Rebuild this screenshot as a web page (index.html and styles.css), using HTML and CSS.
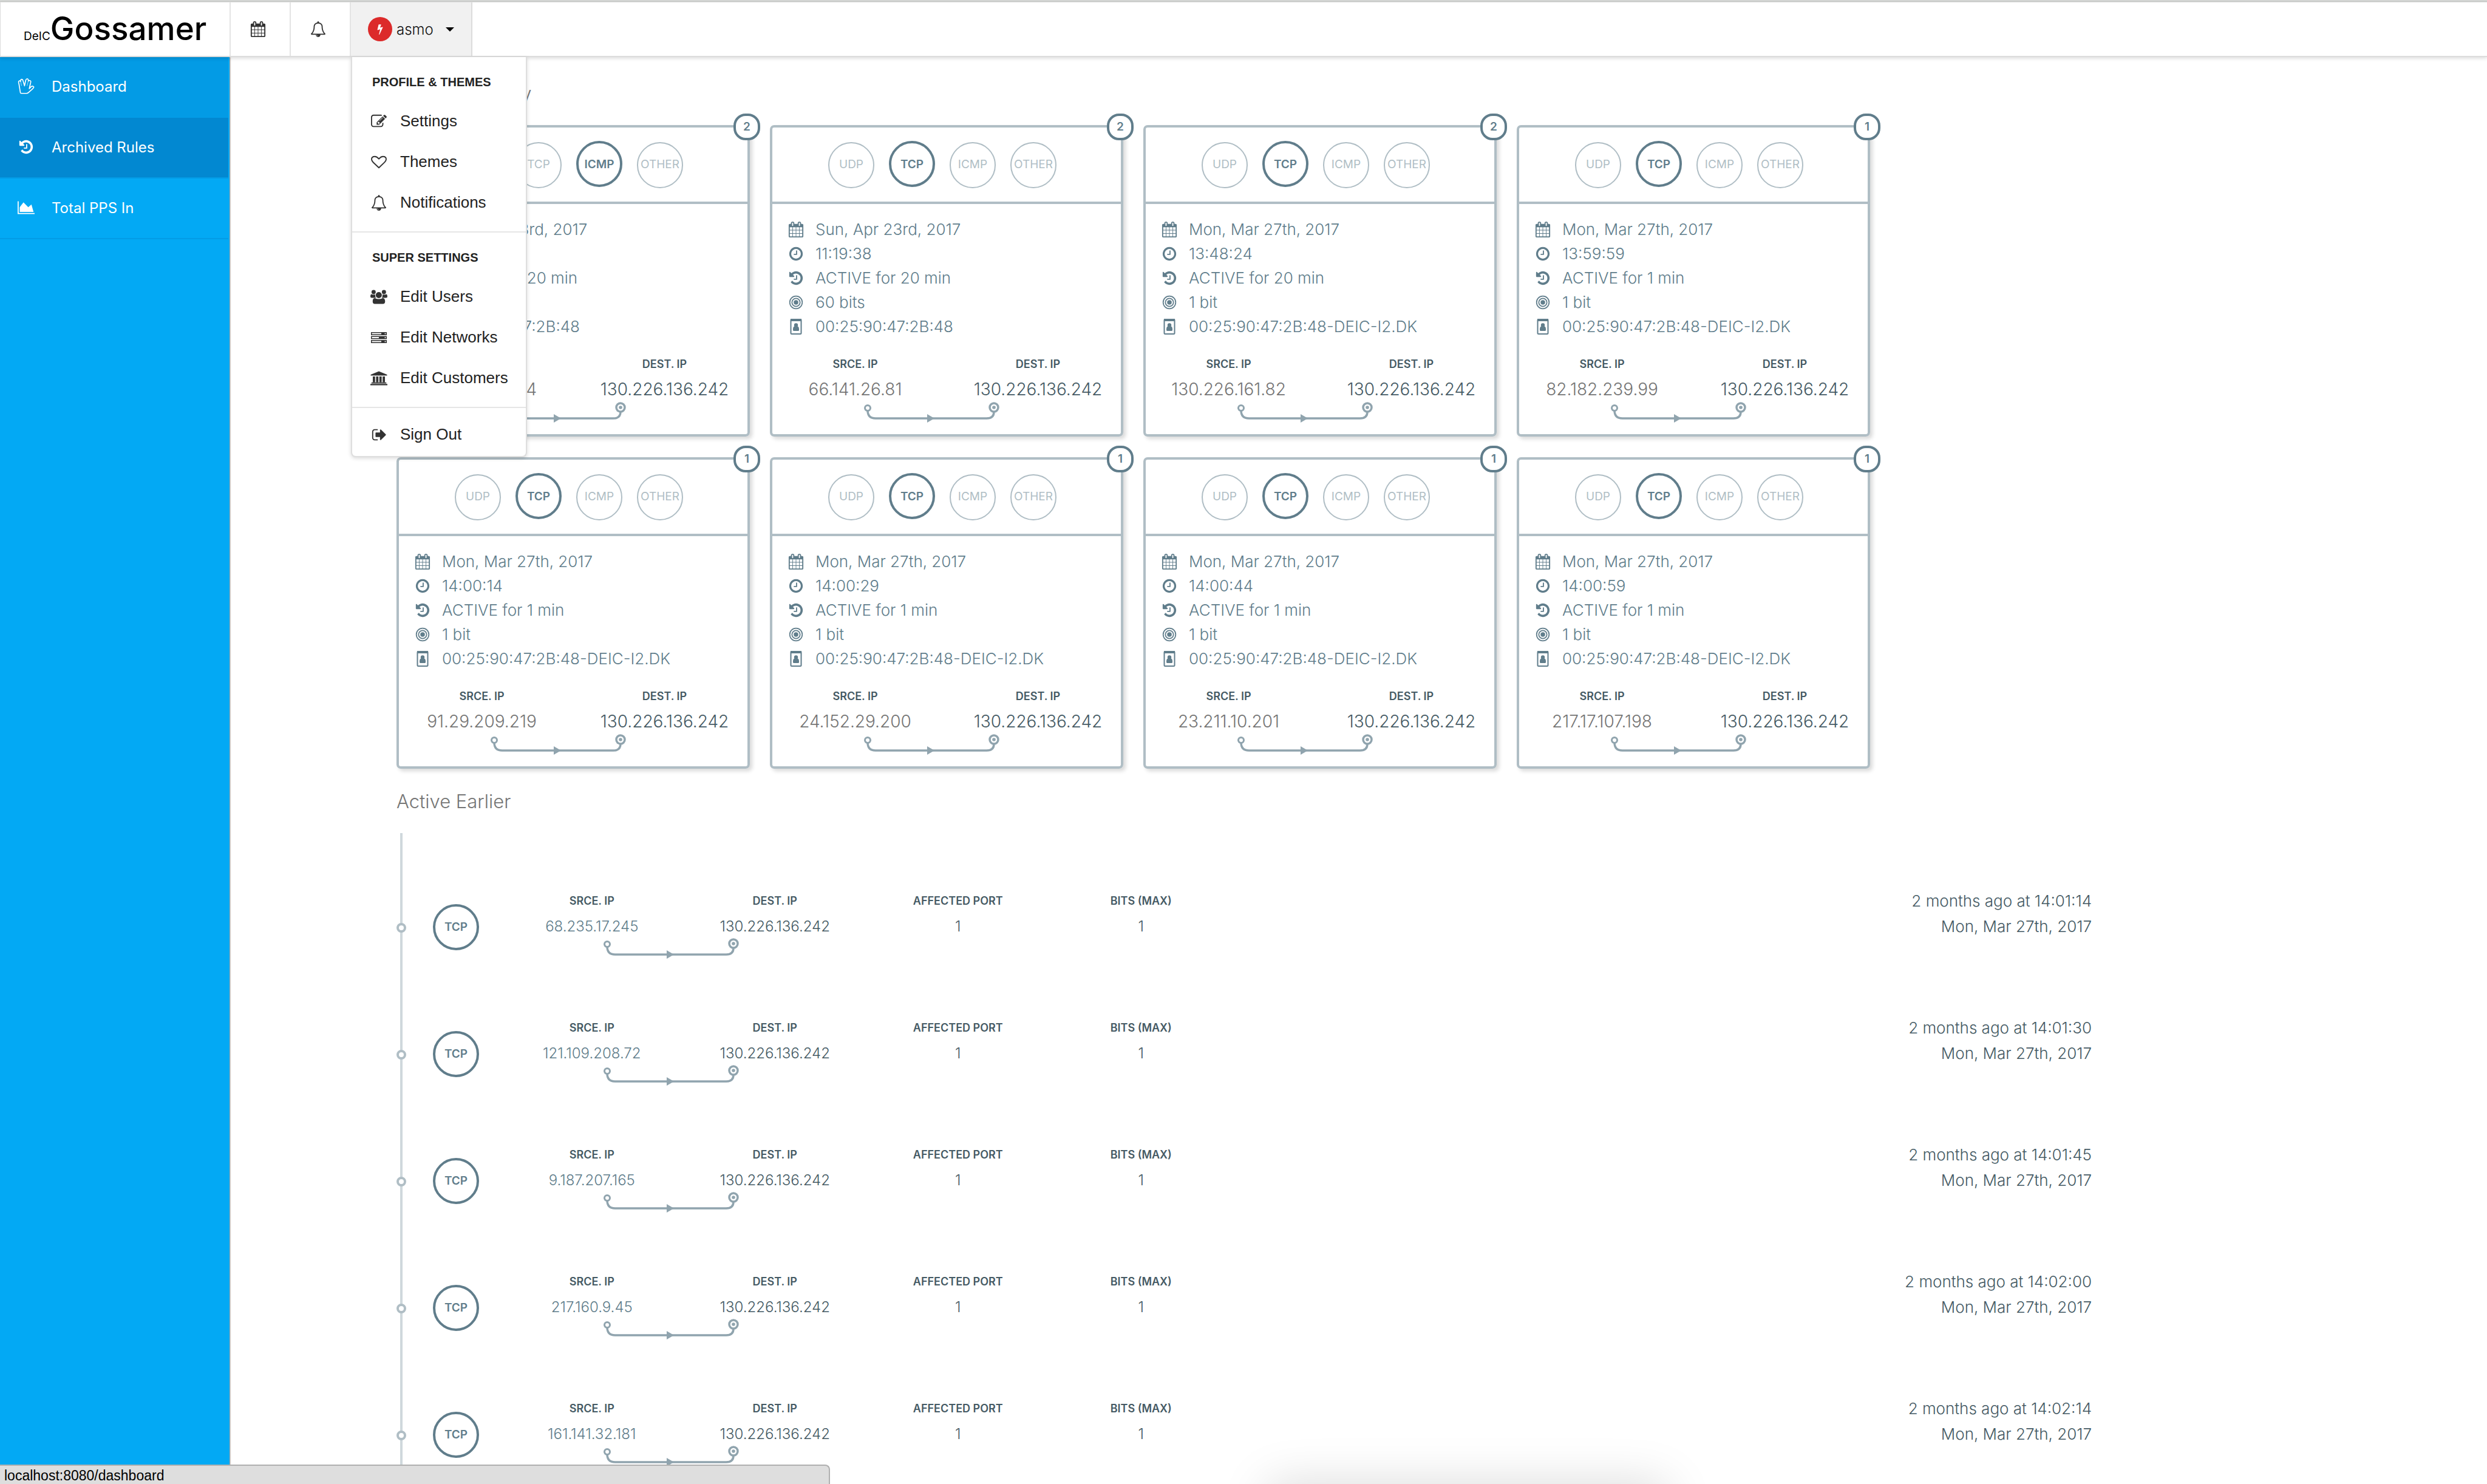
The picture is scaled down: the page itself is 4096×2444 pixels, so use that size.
FILE: index.html
```html
<!DOCTYPE html>
<html lang="en">
<head>
<meta charset="utf-8">
<title>DeIC Gossamer</title>
<link rel="stylesheet" href="styles.css">
</head>
<body>
<svg class="sprite" aria-hidden="true">
  <symbol id="calendar" viewBox="0 0 1792 1792"><path d="M192 1664h288v-288h-288v288zm352 0h320v-288h-320v288zm-352-352h288v-320h-288v320zm352 0h320v-320h-320v320zm-352-384h288v-288h-288v288zm736 736h320v-288h-320v288zm-384-736h320v-288h-320v288zm768 736h288v-288h-288v288zm-384-352h320v-320h-320v320zm-352-864v-288q0-13-9.500-22.500t-22.500-9.500h-64q-13 0-22.500 9.500t-9.500 22.500v288q0 13 9.500 22.500t22.500 9.500h64q13 0 22.500-9.500t9.500-22.500zm736 864h288v-320h-288v320zm-384-384h320v-288h-320v288zm384 0h288v-288h-288v288zm32-480v-288q0-13-9.500-22.500t-22.500-9.500h-64q-13 0-22.500 9.500t-9.500 22.500v288q0 13 9.500 22.500t22.500 9.500h64q13 0 22.500-9.500t9.500-22.500zm384-64v1280q0 52-38 90t-90 38h-1408q-52 0-90-38t-38-90v-1280q0-52 38-90t90-38h128v-96q0-66 47-113t113-47h64q66 0 113 47t47 113v96h384v-96q0-66 47-113t113-47h64q66 0 113 47t47 113v96h128q52 0 90 38t38 90z"/></symbol>
  <symbol id="bell" viewBox="0 0 1792 1792"><path d="M912 1696q0-16-16-16-59 0-101.500-42.500t-42.500-101.500q0-16-16-16t-16 16q0 73 51.500 124.500t124.500 51.500q16 0 16-16zm-666-288h1300q-266-300-266-832 0-51-24-105t-69-103-121.500-80.500-169.500-31.500-169.500 31.500-121.500 80.500-69 103-24 105q0 532-266 832zm1482 0q0 52-38 90t-90 38h-448q0 106-75 181t-181 75-181-75-75-181h-448q-52 0-90-38t-38-90q50-42 91-88t85-119.500 74.500-158.500 50-206 19.500-260q0-152 117-282.500t307-158.500q-8-19-8-39 0-40 28-68t68-28 68 28 28 68q0 20-8 39 190 28 307 158.500t117 282.500q0 139 19.500 260t50 206 74.500 158.500 85 119.500 91 88z"/></symbol>
  <symbol id="history" viewBox="0 0 1792 1792"><path d="M1664 896q0 156-61 298t-164 245-245 164-298 61q-172 0-327-72.500t-264-204.500q-7-10-6.500-22.500t8.500-20.500l137-138q10-9 25-9 16 2 23 12 73 95 179 147t225 52q104 0 198.500-40.500t163.500-109.500 109.500-163.500 40.500-198.500-40.500-198.500-109.500-163.500-163.500-109.500-198.500-40.500q-98 0-188 35.500t-160 101.500l137 138q31 30 14 69-17 40-59 40h-448q-26 0-45-19t-19-45v-448q0-42 40-59 39-17 69 14l130 129q107-101 244.500-156.500t284.500-55.500q156 0 298 61t245 164 164 245 61 298zm-640-288v448q0 14-9 23t-23 9h-320q-14 0-23-9t-9-23v-64q0-14 9-23t23-9h224v-352q0-14 9-23t23-9h64q14 0 23 9t9 23z"/></symbol>
  <symbol id="clock" viewBox="0 0 1792 1792"><path d="M1024 544v448q0 14-9 23t-23 9h-320q-14 0-23-9t-9-23v-64q0-14 9-23t23-9h224v-352q0-14 9-23t23-9h64q14 0 23 9t9 23zm416 352q0-148-73-273t-198-198-273-73-273 73-198 198-73 273 73 273 198 198 273 73 273-73 198-198 73-273zm224 0q0 209-103 385.500t-279.500 279.500-385.500 103-385.500-103-279.500-279.500-103-385.500 103-385.500 279.500-279.500 385.500-103 385.500 103 279.500 279.500 103 385.500z"/></symbol>
  <symbol id="target" viewBox="0 0 1792 1792"><circle cx="896" cy="896" r="710" fill="none" stroke="currentColor" stroke-width="120"/><circle cx="896" cy="896" r="460" fill="none" stroke="currentColor" stroke-width="120"/><circle cx="896" cy="896" r="260"/></symbol>
  <symbol id="badge" viewBox="0 0 26 26"><rect x="4.500" y="1" width="17" height="24" rx="1.500" fill="none" stroke="currentColor" stroke-width="2"/><path d="M4 0h6v2h6V0h6v4H4z"/><circle cx="13" cy="10.500" r="3.200"/><path d="M8 18c0-4 1-5.500 3-5.500 1 1 3 1 4 0 2 0 3 1.500 3 5.500 0 1.500-.5 2-1.500 2h-7C8.500 20 8 19.500 8 18z"/></symbol>
  <symbol id="chart" viewBox="0 0 2048 1792"><path d="M2048 1536v128h-2048v-1536h128v1408h1920zm-384-1024l256 896h-1664v-576l448-576 576 576z"/></symbol>
  <symbol id="hand" viewBox="0 0 84 80"><path fill="none" stroke="currentColor" stroke-width="5" stroke-linejoin="round" d="M13 73 6 30C4 22 2 18 5 15c3-4 8-3 9 1-1-8 2-11 6-11 5 0 6 5 7 9l7 24 6-28c2-7 7-8 10-7 4 2 4 5 3 11 4-5 10-4 12 0 2 3 0 8-1 12l-6 26 10-10c5-4 12-2 13 2 1 3-3 6-7 10L54 72c-3 3-6 4-10 4H20c-4 0-6 0-7-3z"/><path fill="none" stroke="currentColor" stroke-width="2" d="m14 16 5 22m34-24-6 24"/></symbol>
  <symbol id="edit" viewBox="0 0 1792 1792"><path d="M888 1184l116-116-152-152-116 116v56h96v96h56zm440-720q-16-16-33 1l-350 350q-17 17-1 33t33-1l350-350q17-17 1-33zm80 594v190q0 119-84.500 203.500t-203.500 84.500h-832q-119 0-203.500-84.500t-84.500-203.500v-832q0-119 84.500-203.500t203.500-84.500h832q63 0 117 25 15 7 18 23 3 17-9 29l-49 49q-14 14-32 8-23-6-45-6h-832q-66 0-113 47t-47 113v832q0 66 47 113t113 47h832q66 0 113-47t47-113v-126q0-13 9-22l64-64q15-15 35-7t20 29zm-96-738l288 288-672 672h-288v-288zm444 132l-92 92-288-288 92-92q28-28 68-28t68 28l152 152q28 28 28 68t-28 68z"/></symbol>
  <symbol id="heart" viewBox="0 0 26 26"><path fill="none" stroke="currentColor" stroke-width="1.900" stroke-linejoin="round" d="M13 22.300 3.500 13.200C1.600 11.300 1 9.700 1 8.300 1 5.200 3.200 3.700 6.300 3.700c3 0 4.900 1.800 6.700 4 1.800-2.200 3.700-4 6.700-4 3.100 0 5.300 1.500 5.300 4.600 0 1.400-.6 3-2.500 4.900z"/></symbol>
  <symbol id="users" viewBox="0 0 89 73"><circle cx="17" cy="11" r="11"/><circle cx="71" cy="11" r="11"/><circle cx="44" cy="27" r="16"/><path d="M0 35c0-8 2-13 7-13q9 5 18 1-1 10 4 18H7q-7 0-7-6zM89 35c0-8-2-13-7-13q-9 5-18 1 1 10-4 18h22q7 0 7-6zM12 60c0-12 4-17 12-17q20 10 40 0c8 0 13 5 13 17 0 9-4 13-11 13H23c-7 0-11-4-11-13z"/></symbol>
  <symbol id="server" viewBox="0 0 26 26"><path fill-rule="evenodd" d="M0 4h26v5H0zm1.500 1.600v1.800H17V5.600zM0 10.500h26v5H0zm1.500 1.600v1.800H13v-1.800zM0 17h26v5H0zm1.500 1.600v1.800H17v-1.800z"/><g fill="#fff"><circle cx="23.500" cy="6.500" r="1"/><circle cx="23.500" cy="13" r="1"/><circle cx="23.500" cy="19.500" r="1"/></g></symbol>
  <symbol id="bank" viewBox="0 0 28 23"><path d="M14 0 27.500 5.500V7H.5V5.500zM4 8.500h3.800V18H4zm5.400 0h3.800V18H9.400zm5.400 0h3.800V18h-3.800zm5.400 0H24V18h-3.800zM1.800 18.300h24.400v1.800H1.800zM0 20.800h28V23H0z"/></symbol>
  <symbol id="signout" viewBox="-64 0 1792 1792"><path d="M704 1440q0 4 1 20t.5 26.500-3 23.500-10 19.500-20.500 6.500h-320q-119 0-203.500-84.500t-84.500-203.500v-704q0-119 84.500-203.500t203.500-84.500h320q13 0 22.500 9.500t9.500 22.500q0 4 1 20t.5 26.500-3 23.500-10 19.500-20.500 6.500h-320q-66 0-113 47t-47 113v704q0 66 47 113t113 47h312l11.500 1 11.500 3 8 5.500 7 9 2 13.500zm928-544q0 26-19 45l-544 544q-19 19-45 19t-45-19-19-45v-288h-448q-26 0-45-19t-19-45v-384q0-26 19-45t45-19h448v-288q0-26 19-45t45-19 45 19l544 544q19 19 19 45z"/></symbol>
  <symbol id="bolt" viewBox="0 0 1792 1792"><path d="M1333 566q18 20 7 44l-540 1157q-13 25-42 25-4 0-14-2-17-5-25.500-19t-4.500-30l197-808-406 101q-4 1-12 1-18 0-31-11-18-15-13-39l201-825q4-14 16-23t28-9h328q19 0 32 12.500t13 29.500q0 8-5 18l-171 463 396-98q8-2 12-2 19 0 34 15z"/></symbol>
  <symbol id="link" viewBox="0 0 226 34"><g fill="none" stroke="currentColor"><path stroke-width="3.500" d="M8 14c0 9 5 13 13 13h183c8 0 12-4 12-11"/><circle cx="8" cy="10" r="4.500" stroke-width="3" fill="#fff"/><circle cx="216" cy="9" r="7" stroke-width="3.500" fill="#fff"/></g><circle cx="216" cy="9" r="2.800"/><path d="m106 20 12 7-12 7z"/></symbol>
</svg>

<header class="topbar">
  <div class="topbar-inner">
    <a class="logo" href="#"><span class="logo-small">DeIC</span><span class="logo-name">Gossamer</span></a>
    <button class="tool" aria-label="Calendar"><svg class="icon"><use href="#calendar"/></svg></button>
    <button class="tool" aria-label="Notifications"><svg class="icon"><use href="#bell"/></svg></button>
    <div class="account">
      <button class="account-button" aria-expanded="true"><span class="avatar"><svg class="bolt"><use href="#bolt"/></svg></span>asmo<span class="caret"></span></button>
      <div class="menu">
        <div class="menu-group">
          <h2 class="menu-title">PROFILE &amp; THEMES</h2>
          <a class="menu-item" href="#"><svg class="icon"><use href="#edit"/></svg>Settings</a>
          <a class="menu-item" href="#"><svg class="icon"><use href="#heart"/></svg>Themes</a>
          <a class="menu-item" href="#"><svg class="icon"><use href="#bell"/></svg>Notifications</a>
        </div>
        <div class="menu-group">
          <h2 class="menu-title">SUPER SETTINGS</h2>
          <a class="menu-item" href="#"><svg class="icon wide"><use href="#users"/></svg>Edit Users</a>
          <a class="menu-item" href="#"><svg class="icon"><use href="#server"/></svg>Edit Networks</a>
          <a class="menu-item" href="#"><svg class="icon wide"><use href="#bank"/></svg>Edit Customers</a>
        </div>
        <div class="menu-group menu-last">
          <a class="menu-item" href="#"><svg class="icon"><use href="#signout"/></svg>Sign Out</a>
        </div>
      </div>
    </div>
  </div>
</header>

<div class="layout">
  <nav class="sidebar">
    <a class="nav-item nav-hover" href="#"><svg class="nav-icon"><use href="#hand"/></svg>Dashboard</a>
    <a class="nav-item nav-active" href="#"><svg class="nav-icon"><use href="#history"/></svg>Archived Rules</a>
    <a class="nav-item" href="#"><svg class="nav-icon"><use href="#chart"/></svg>Total PPS In</a>
  </nav>

  <main class="content">
    <h1 class="heading">Active Recently</h1>
    <div class="cards">
      <article class="card">
        <span class="count">2</span>
        <div class="protocols"><span class="circle">UDP</span><span class="circle">TCP</span><span class="circle on">ICMP</span><span class="circle">OTHER</span></div>
        <ul class="facts">
          <li><svg class="icon"><use href="#calendar"/></svg>Sun, Apr 23rd, 2017</li>
          <li><svg class="icon"><use href="#clock"/></svg>11:19:38</li>
          <li><svg class="icon"><use href="#history"/></svg>ACTIVE for 20 min</li>
          <li><svg class="icon"><use href="#target"/></svg>60 bits</li>
          <li><svg class="icon"><use href="#badge"/></svg>00:25:90:47:2B:48</li>
        </ul>
        <dl class="route"><div class="pair"><dt>SRCE. IP</dt><dd>91.29.209.214</dd></div><div class="pair dest"><dt>DEST. IP</dt><dd>130.226.136.242</dd></div></dl>
        <svg class="link"><use href="#link"/></svg>
      </article>
      <article class="card">
        <span class="count">2</span>
        <div class="protocols"><span class="circle">UDP</span><span class="circle on">TCP</span><span class="circle">ICMP</span><span class="circle">OTHER</span></div>
        <ul class="facts">
          <li><svg class="icon"><use href="#calendar"/></svg>Sun, Apr 23rd, 2017</li>
          <li><svg class="icon"><use href="#clock"/></svg>11:19:38</li>
          <li><svg class="icon"><use href="#history"/></svg>ACTIVE for 20 min</li>
          <li><svg class="icon"><use href="#target"/></svg>60 bits</li>
          <li><svg class="icon"><use href="#badge"/></svg>00:25:90:47:2B:48</li>
        </ul>
        <dl class="route"><div class="pair"><dt>SRCE. IP</dt><dd>66.141.26.81</dd></div><div class="pair dest"><dt>DEST. IP</dt><dd>130.226.136.242</dd></div></dl>
        <svg class="link"><use href="#link"/></svg>
      </article>
      <article class="card">
        <span class="count">2</span>
        <div class="protocols"><span class="circle">UDP</span><span class="circle on">TCP</span><span class="circle">ICMP</span><span class="circle">OTHER</span></div>
        <ul class="facts">
          <li><svg class="icon"><use href="#calendar"/></svg>Mon, Mar 27th, 2017</li>
          <li><svg class="icon"><use href="#clock"/></svg>13:48:24</li>
          <li><svg class="icon"><use href="#history"/></svg>ACTIVE for 20 min</li>
          <li><svg class="icon"><use href="#target"/></svg>1 bit</li>
          <li><svg class="icon"><use href="#badge"/></svg>00:25:90:47:2B:48-DEIC-I2.DK</li>
        </ul>
        <dl class="route"><div class="pair"><dt>SRCE. IP</dt><dd>130.226.161.82</dd></div><div class="pair dest"><dt>DEST. IP</dt><dd>130.226.136.242</dd></div></dl>
        <svg class="link"><use href="#link"/></svg>
      </article>
      <article class="card">
        <span class="count">1</span>
        <div class="protocols"><span class="circle">UDP</span><span class="circle on">TCP</span><span class="circle">ICMP</span><span class="circle">OTHER</span></div>
        <ul class="facts">
          <li><svg class="icon"><use href="#calendar"/></svg>Mon, Mar 27th, 2017</li>
          <li><svg class="icon"><use href="#clock"/></svg>13:59:59</li>
          <li><svg class="icon"><use href="#history"/></svg>ACTIVE for 1 min</li>
          <li><svg class="icon"><use href="#target"/></svg>1 bit</li>
          <li><svg class="icon"><use href="#badge"/></svg>00:25:90:47:2B:48-DEIC-I2.DK</li>
        </ul>
        <dl class="route"><div class="pair"><dt>SRCE. IP</dt><dd>82.182.239.99</dd></div><div class="pair dest"><dt>DEST. IP</dt><dd>130.226.136.242</dd></div></dl>
        <svg class="link"><use href="#link"/></svg>
      </article>
      <article class="card">
        <span class="count">1</span>
        <div class="protocols"><span class="circle">UDP</span><span class="circle on">TCP</span><span class="circle">ICMP</span><span class="circle">OTHER</span></div>
        <ul class="facts">
          <li><svg class="icon"><use href="#calendar"/></svg>Mon, Mar 27th, 2017</li>
          <li><svg class="icon"><use href="#clock"/></svg>14:00:14</li>
          <li><svg class="icon"><use href="#history"/></svg>ACTIVE for 1 min</li>
          <li><svg class="icon"><use href="#target"/></svg>1 bit</li>
          <li><svg class="icon"><use href="#badge"/></svg>00:25:90:47:2B:48-DEIC-I2.DK</li>
        </ul>
        <dl class="route"><div class="pair"><dt>SRCE. IP</dt><dd>91.29.209.219</dd></div><div class="pair dest"><dt>DEST. IP</dt><dd>130.226.136.242</dd></div></dl>
        <svg class="link"><use href="#link"/></svg>
      </article>
      <article class="card">
        <span class="count">1</span>
        <div class="protocols"><span class="circle">UDP</span><span class="circle on">TCP</span><span class="circle">ICMP</span><span class="circle">OTHER</span></div>
        <ul class="facts">
          <li><svg class="icon"><use href="#calendar"/></svg>Mon, Mar 27th, 2017</li>
          <li><svg class="icon"><use href="#clock"/></svg>14:00:29</li>
          <li><svg class="icon"><use href="#history"/></svg>ACTIVE for 1 min</li>
          <li><svg class="icon"><use href="#target"/></svg>1 bit</li>
          <li><svg class="icon"><use href="#badge"/></svg>00:25:90:47:2B:48-DEIC-I2.DK</li>
        </ul>
        <dl class="route"><div class="pair"><dt>SRCE. IP</dt><dd>24.152.29.200</dd></div><div class="pair dest"><dt>DEST. IP</dt><dd>130.226.136.242</dd></div></dl>
        <svg class="link"><use href="#link"/></svg>
      </article>
      <article class="card">
        <span class="count">1</span>
        <div class="protocols"><span class="circle">UDP</span><span class="circle on">TCP</span><span class="circle">ICMP</span><span class="circle">OTHER</span></div>
        <ul class="facts">
          <li><svg class="icon"><use href="#calendar"/></svg>Mon, Mar 27th, 2017</li>
          <li><svg class="icon"><use href="#clock"/></svg>14:00:44</li>
          <li><svg class="icon"><use href="#history"/></svg>ACTIVE for 1 min</li>
          <li><svg class="icon"><use href="#target"/></svg>1 bit</li>
          <li><svg class="icon"><use href="#badge"/></svg>00:25:90:47:2B:48-DEIC-I2.DK</li>
        </ul>
        <dl class="route"><div class="pair"><dt>SRCE. IP</dt><dd>23.211.10.201</dd></div><div class="pair dest"><dt>DEST. IP</dt><dd>130.226.136.242</dd></div></dl>
        <svg class="link"><use href="#link"/></svg>
      </article>
      <article class="card">
        <span class="count">1</span>
        <div class="protocols"><span class="circle">UDP</span><span class="circle on">TCP</span><span class="circle">ICMP</span><span class="circle">OTHER</span></div>
        <ul class="facts">
          <li><svg class="icon"><use href="#calendar"/></svg>Mon, Mar 27th, 2017</li>
          <li><svg class="icon"><use href="#clock"/></svg>14:00:59</li>
          <li><svg class="icon"><use href="#history"/></svg>ACTIVE for 1 min</li>
          <li><svg class="icon"><use href="#target"/></svg>1 bit</li>
          <li><svg class="icon"><use href="#badge"/></svg>00:25:90:47:2B:48-DEIC-I2.DK</li>
        </ul>
        <dl class="route"><div class="pair"><dt>SRCE. IP</dt><dd>217.17.107.198</dd></div><div class="pair dest"><dt>DEST. IP</dt><dd>130.226.136.242</dd></div></dl>
        <svg class="link"><use href="#link"/></svg>
      </article>
    </div>

    <h1 class="heading">Active Earlier</h1>
    <ol class="timeline">
      <li class="event">
        <span class="circle on">TCP</span>
        <div class="details">
          <dl class="route"><div class="pair"><dt>SRCE. IP</dt><dd>68.235.17.245</dd></div><div class="pair dest"><dt>DEST. IP</dt><dd>130.226.136.242</dd></div><div class="pair dest"><dt>AFFECTED PORT</dt><dd>1</dd></div><div class="pair dest"><dt>BITS (MAX)</dt><dd>1</dd></div></dl>
          <svg class="link"><use href="#link"/></svg>
        </div>
        <p class="when">2 months ago at 14:01:14<br>Mon, Mar 27th, 2017</p>
      </li>
      <li class="event">
        <span class="circle on">TCP</span>
        <div class="details">
          <dl class="route"><div class="pair"><dt>SRCE. IP</dt><dd>121.109.208.72</dd></div><div class="pair dest"><dt>DEST. IP</dt><dd>130.226.136.242</dd></div><div class="pair dest"><dt>AFFECTED PORT</dt><dd>1</dd></div><div class="pair dest"><dt>BITS (MAX)</dt><dd>1</dd></div></dl>
          <svg class="link"><use href="#link"/></svg>
        </div>
        <p class="when">2 months ago at 14:01:30<br>Mon, Mar 27th, 2017</p>
      </li>
      <li class="event">
        <span class="circle on">TCP</span>
        <div class="details">
          <dl class="route"><div class="pair"><dt>SRCE. IP</dt><dd>9.187.207.165</dd></div><div class="pair dest"><dt>DEST. IP</dt><dd>130.226.136.242</dd></div><div class="pair dest"><dt>AFFECTED PORT</dt><dd>1</dd></div><div class="pair dest"><dt>BITS (MAX)</dt><dd>1</dd></div></dl>
          <svg class="link"><use href="#link"/></svg>
        </div>
        <p class="when">2 months ago at 14:01:45<br>Mon, Mar 27th, 2017</p>
      </li>
      <li class="event">
        <span class="circle on">TCP</span>
        <div class="details">
          <dl class="route"><div class="pair"><dt>SRCE. IP</dt><dd>217.160.9.45</dd></div><div class="pair dest"><dt>DEST. IP</dt><dd>130.226.136.242</dd></div><div class="pair dest"><dt>AFFECTED PORT</dt><dd>1</dd></div><div class="pair dest"><dt>BITS (MAX)</dt><dd>1</dd></div></dl>
          <svg class="link"><use href="#link"/></svg>
        </div>
        <p class="when">2 months ago at 14:02:00<br>Mon, Mar 27th, 2017</p>
      </li>
      <li class="event">
        <span class="circle on">TCP</span>
        <div class="details">
          <dl class="route"><div class="pair"><dt>SRCE. IP</dt><dd>161.141.32.181</dd></div><div class="pair dest"><dt>DEST. IP</dt><dd>130.226.136.242</dd></div><div class="pair dest"><dt>AFFECTED PORT</dt><dd>1</dd></div><div class="pair dest"><dt>BITS (MAX)</dt><dd>1</dd></div></dl>
          <svg class="link"><use href="#link"/></svg>
        </div>
        <p class="when">2 months ago at 14:02:14<br>Mon, Mar 27th, 2017</p>
      </li>
    </ol>
  </main>
</div>

<div class="dock-shadow"></div>
<div class="status">localhost:8080/dashboard</div>
</body>
</html>
```
FILE: styles.css
```css
*,
*::before {
  box-sizing: border-box;
}

body,
h1,
h2,
p,
ul,
ol,
dl,
dd {
  margin: 0;
  padding: 0;
}

ul,
ol {
  list-style: none;
}

body {
  display: flex;
  flex-direction: column;
  height: 100vh;
  overflow: hidden;
  background: #fff;
  color: #455a64;
  font-family: Inter, "Liberation Sans", sans-serif;
  font-weight: 300;
}

a {
  color: inherit;
  text-decoration: none;
}

button {
  margin: 0;
  padding: 0;
  border: 0;
  background: none;
  color: inherit;
  font: inherit;
}

svg {
  display: block;
  flex: none;
  fill: currentColor;
}

.sprite {
  position: absolute;
  width: 0;
  height: 0;
}

.icon {
  width: 26px;
  height: 26px;
}

/* Top bar */

.topbar {
  position: relative;
  z-index: 2;
  margin-top: 1px;
  border-top: 1px solid #a3a8a3;
  background: #fff;
  box-shadow: 0 2px 6px rgba(0, 0, 0, 0.15);
}

.topbar-inner {
  display: flex;
  height: 92px;
  border: 2px solid #dcdcdc;
  border-width: 2px 0 2px 1px;
}

.logo {
  display: flex;
  align-items: baseline;
  width: 379px;
  padding: 11px 0 0 38px;
  border-right: 2px solid #e4e4e4;
  color: #000;
  line-height: 64px;
}

.logo-small {
  font-size: 19px;
  font-weight: 400;
}

.logo-name {
  font-size: 53px;
  font-weight: 500;
}

.tool {
  display: flex;
  align-items: center;
  justify-content: center;
  width: 99px;
  padding-right: 8px;
  border-right: 2px solid #e4e4e4;
  color: #333;
}

.account {
  position: relative;
  display: flex;
}

.account-button {
  display: flex;
  align-items: center;
  width: 200px;
  padding-left: 28px;
  border-right: 2px solid #dcdcdc;
  background: #f1f1f1;
  color: #111;
  font-size: 24px;
}

.avatar {
  display: flex;
  align-items: center;
  justify-content: center;
  width: 40px;
  height: 40px;
  margin-right: 7px;
  border-radius: 50%;
  background: #dc2a2a;
  color: #fff;
}

.bolt {
  width: 18px;
  height: 18px;
}

.caret {
  margin-left: 20px;
  border: 7px solid transparent;
  border-top-color: #000;
  border-bottom-width: 0;
}

.menu {
  position: absolute;
  top: 100%;
  left: 0;
  width: 290px;
  margin-top: 2px;
  border: 2px solid #dedede;
  border-top: 0;
  border-radius: 0 0 8px 8px;
  background: #fff;
  color: #222;
  font-family: "Liberation Sans", Arial, sans-serif;
  font-weight: 400;
  box-shadow: 0 2px 6px rgba(0, 0, 0, 0.15);
}

.menu-group {
  padding: 10px 0 14px;
  border-bottom: 2px solid #e6e6e6;
}

.menu-last {
  padding-bottom: 2px;
  border-bottom: 0;
}

.menu-title {
  padding-left: 33px;
  font-size: 20px;
  line-height: 62px;
}

.menu-item {
  display: flex;
  align-items: center;
  gap: 22px;
  padding-left: 31px;
  font-size: 26px;
  line-height: 67px;
  white-space: nowrap;
}

.menu-item .icon {
  color: #333;
}

.menu-item .wide {
  width: 28px;
  margin: 0 -1px;
}

/* Page frame */

.layout {
  display: flex;
  flex: 1;
  min-height: 0;
}

.sidebar {
  position: relative;
  z-index: 1;
  flex: none;
  width: 378px;
  padding-right: 2px;
  background: #03a9f4;
  box-shadow: 1px 0 2px rgba(0, 0, 0, 0.5);
}

.nav-item {
  display: flex;
  align-items: center;
  gap: 28px;
  height: 100px;
  padding: 0 0 2px 29px;
  border-bottom: 2px solid #039be5;
  color: #fff;
  font-size: 24px;
  font-weight: 400;
}

.nav-icon {
  width: 28px;
  height: 26px;
}

.nav-hover {
  background: #039be5;
}

.nav-active {
  background: #0288d1;
}

.content {
  flex: 1;
  min-width: 0;
  padding: 40px 651px 0 275px;
  overflow: hidden;
}

.heading {
  color: #757575;
  font-size: 31px;
  font-weight: 300;
  line-height: 40px;
}

/* Rule cards */

.cards {
  display: flex;
  flex-wrap: wrap;
  gap: 34px 33px;
  padding: 32px 0 34px;
}

.card {
  position: relative;
  width: 582px;
  padding-bottom: 19px;
  border: 4px solid #b0bec5;
  border-radius: 7px;
  box-shadow: 4px 4px 6px rgba(0, 0, 0, 0.15);
}

.count {
  position: absolute;
  top: -23px;
  right: -21px;
  width: 44px;
  height: 44px;
  border: 4px solid #607d8b;
  border-radius: 20px;
  background: #fff;
  color: #607d8b;
  font-size: 19px;
  font-weight: 600;
  line-height: 36px;
  text-align: center;
}

.protocols {
  display: flex;
  align-items: baseline;
  gap: 24px;
  height: 126px;
  padding: 22px 0 0 92px;
  border-bottom: 4px solid #b0bec5;
}

.circle {
  display: flex;
  flex: none;
  justify-content: center;
  width: 76px;
  height: 76px;
  border: 2px solid #b0bec5;
  border-radius: 50%;
  color: #b0bec5;
  font-size: 19px;
  font-weight: 400;
  line-height: 70px;
}

.circle.on {
  border: 4px solid #607d8b;
  color: #607d8b;
  font-weight: 600;
}

.facts {
  padding: 22px 0 0 26px;
  color: #607d8b;
  font-size: 26px;
  line-height: 40px;
}

.facts li {
  display: flex;
  align-items: center;
  gap: 19px;
}

.route {
  display: flex;
  margin: 30px -14px 0;
}

.pair {
  flex: 1;
  color: #757575;
  font-size: 28px;
  line-height: 40px;
  text-align: center;
}

.pair dt {
  margin-bottom: 9px;
  color: #455a64;
  font-size: 18px;
  font-weight: 600;
  line-height: 24px;
}

.pair.dest {
  color: #455a64;
}

.link {
  width: 226px;
  height: 34px;
  margin: 1px 0 0 149px;
  color: #90a4ae;
}

/* Timeline */

.timeline {
  margin: 32px 0 0 6px;
  padding: 50px 0 0 50px;
  border-left: 4px solid #cfd8dc;
}

.event {
  position: relative;
  display: flex;
  min-height: 209px;
  padding: 41px 0;
}

.event::before {
  content: "";
  position: absolute;
  top: 98px;
  left: -60px;
  width: 16px;
  height: 16px;
  border: 4px solid #b0bec5;
  border-radius: 50%;
  background: #fff;
}

.event .circle {
  margin: 26px 35px 0 0;
  line-height: 68px;
}

.details .route {
  width: 1206px;
  margin: 9px 0 0;
}

.details .pair {
  color: #607d8b;
  font-size: 24px;
  line-height: 36px;
}

.details .pair dt {
  margin-bottom: 12px;
}

.details .pair.dest {
  color: #455a64;
}

.details .link {
  margin-left: 168px;
}

.when {
  margin-left: auto;
  font-size: 26px;
  line-height: 42px;
  text-align: right;
}

/* Window overlays */

.status {
  position: fixed;
  z-index: 3;
  bottom: 0;
  left: 0;
  width: 1367px;
  height: 32px;
  padding-left: 7px;
  border: 2px solid #b0b0b0;
  border-width: 2px 2px 0 0;
  border-radius: 0 8px 0 0;
  background: #dedede;
  color: #000;
  font: 23px/32px "Liberation Sans", Arial, sans-serif;
}

.dock-shadow {
  position: fixed;
  top: 100%;
  left: 51%;
  width: 16%;
  height: 80px;
  box-shadow: 0 0 80px rgba(0, 0, 0, 0.15);
}
```
